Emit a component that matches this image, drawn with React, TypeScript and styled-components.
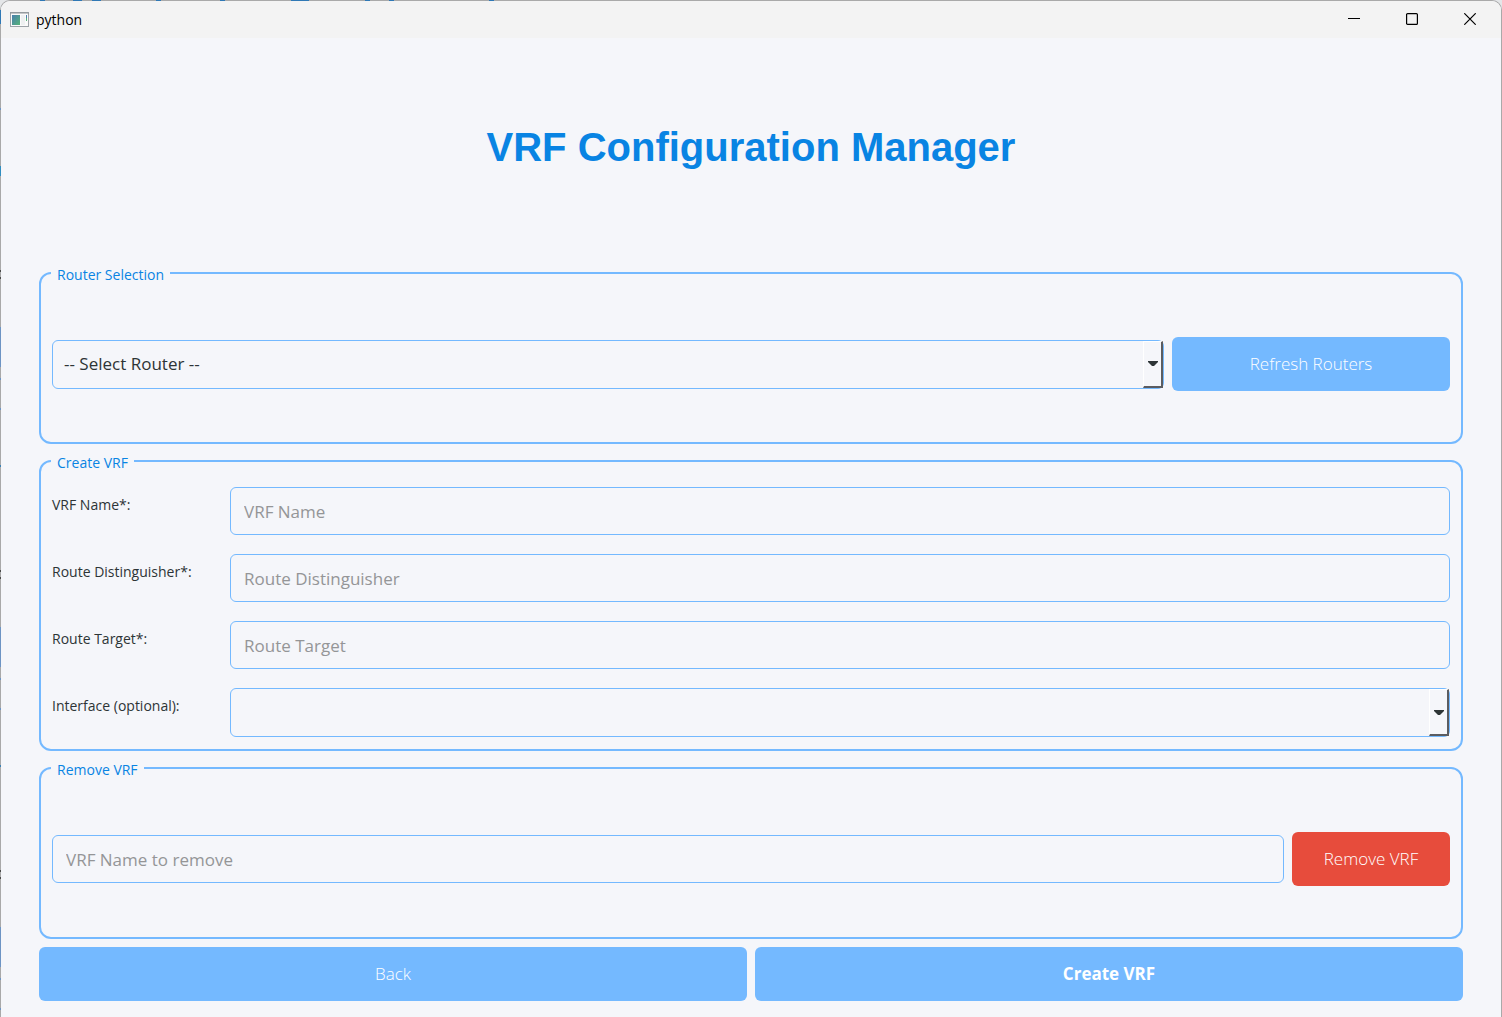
import React from "react";
import styled, { createGlobalStyle } from "styled-components";

const color = {
  surface: "#f5f6fa",
  titleBar: "#f3f3f3",
  frame: "#a9a9a9",
  accent: "#74b9ff",
  heading: "#0984e3",
  text: "#2d3436",
  hint: "#949597",
  danger: "#e74c3c",
};

const uiFont = `"Open Sans", "Noto Sans", sans-serif`;

/* Marks of the windows behind that show through the thin frame: [start, end, colour]. */
type Mark = [number, number, string];

const topMarks: Mark[] = [
  [40, 45, "#2f78b5"],
  [73, 82, "#2f78b5"],
  [92, 101, "#2f78b5"],
  [156, 161, "#2f78b5"],
  [220, 225, "#2f78b5"],
  [291, 309, "#2f78b5"],
  [365, 370, "#2f78b5"],
  [389, 394, "#2f78b5"],
  [489, 494, "#2f78b5"],
];

const leftMarks: Mark[] = [
  [10, 24, "#2f78b5"],
  [108, 110, "#6d94c4"],
  [166, 176, "#2f8dc0"],
  ...[0, 300, 600].flatMap((y): Mark[] => [
    [y + 270, y + 272, "#4a4a4a"],
    [y + 277, y + 279, "#4a4a4a"],
    [y + 327, y + 367, "#6d94c4"],
    [y + 378, y + 380, "#6d94c4"],
    [y + 408, y + 410, "#6d94c4"],
    [y + 465, y + 467, "#3a80b4"],
  ]),
].filter(([start]) => (start as number) < 1017) as Mark[];

const marksGradient = (direction: string, marks: Mark[]) =>
  `linear-gradient(${direction}, ${marks
    .map(([a, b, c]) => `${color.frame} ${a}px, ${c} ${a}px, ${c} ${b}px, ${color.frame} ${b}px`)
    .join(", ")})`;

const GlobalStyle = createGlobalStyle`
  *, *::before, *::after { box-sizing: border-box; }
  body {
    margin: 0;
    background: #e4e6e8;
    font-family: ${uiFont};
    color: ${color.text};
  }
`;

const Window = styled.div`
  display: flex;
  flex-direction: column;
  min-height: 100vh;
  border: 1px solid transparent;
  border-bottom: 0;
  border-radius: 10px 10px 0 0;
  overflow: hidden;
  background:
    linear-gradient(${color.surface}, ${color.surface}) padding-box,
    ${marksGradient("to bottom", leftMarks)} left / 1px 100% no-repeat border-box,
    ${marksGradient("to right", topMarks)} border-box;
`;

const TitleBar = styled.header`
  display: flex;
  align-items: center;
  height: 37px;
  padding: 0 2px 0 9px;
  background: ${color.titleBar};
`;

const AppName = styled.span`
  flex: 1;
  padding-left: 7px;
  font-size: 14px;
  line-height: 20px;
  color: #000;
`;

const CaptionButton = styled.button`
  display: flex;
  align-items: center;
  justify-content: center;
  width: 58px;
  height: 100%;
  padding: 0 0 2px;
  border: 0;
  background: transparent;
`;

const Content = styled.main`
  display: flex;
  flex: 1;
  flex-direction: column;
  gap: 8px;
  padding: 0 38px 16px;
`;

const Heading = styled.h1`
  display: flex;
  flex: 1;
  align-items: center;
  justify-content: center;
  margin: 0;
  font: bold 40px/48px "Liberation Sans", Arial, sans-serif;
  color: ${color.heading};
`;

const Group = styled.fieldset`
  min-width: 0;
  margin: 0;
  padding: 0 11px;
  border: 2px solid ${color.accent};
  border-radius: 12px;
`;

const GroupTitle = styled.legend`
  padding: 4px 6px 0;
  margin-left: -1px;
  font-size: 14px;
  line-height: 14px;
  color: ${color.heading};
`;

const ActionRow = styled.div`
  display: flex;
  align-items: center;
  gap: 8px;
  padding: 55px 0 51px;
`;

const Form = styled.div`
  display: grid;
  grid-template-columns: 178px 1fr;
  row-gap: 19px;
  padding: 17px 0 12px;
`;

const FieldLabel = styled.label`
  padding-top: 8px;
  font-size: 14px;
  line-height: 20px;
`;

const TextField = styled.input`
  flex: 1;
  min-width: 0;
  height: 48px;
  padding: 0 13px;
  border: 1px solid ${color.accent};
  border-radius: 6px;
  background: transparent;
  font: 17px/24px ${uiFont};
  color: ${color.text};

  &::placeholder { color: ${color.hint}; opacity: 1; }
`;

const ComboFrame = styled.div`
  position: relative;
  flex: 4;
  min-width: 0;
`;

const ComboSelect = styled.select`
  display: block;
  width: 100%;
  height: 49px;
  padding: 0 32px 0 11px;
  appearance: none;
  border: 1px solid ${color.accent};
  border-radius: 6px;
  background: transparent;
  font: 17px/24px ${uiFont};
  color: ${color.text};
`;

const ComboArrow = styled.span`
  position: absolute;
  top: 1px;
  right: 1px;
  bottom: 1px;
  display: flex;
  align-items: center;
  justify-content: center;
  width: 20px;
  border: 1px solid #fff;
  border-right: 2px solid #5b5c60;
  border-bottom: 2px solid #5b5c60;
  background: ${color.surface};
  pointer-events: none;
`;

const Button = styled.button<{ $danger?: boolean; $bold?: boolean }>`
  flex: ${(p) => (p.$danger ? "0 0 158px" : "1 1 0")};
  height: 54px;
  padding: 0;
  border: 0;
  border-radius: 6px;
  background: ${(p) => (p.$danger ? color.danger : color.accent)};
  font: ${(p) => (p.$bold ? 700 : 300)} 17px/24px ${uiFont};
  color: #fff;
`;

const Actions = styled.div`
  display: flex;
  gap: 8px;
`;

const AppIcon = () => (
  <svg width="19" height="16" viewBox="0 0 19 16" aria-hidden="true">
    <defs>
      <linearGradient id="screen" x1="0" y1="0" x2="1" y2="1">
        <stop offset="0" stopColor="#4a7fae" />
        <stop offset="1" stopColor="#55b378" />
      </linearGradient>
    </defs>
    <rect x="0.5" y="0.5" width="18" height="14" fill="#fafafa" stroke="#9da3a8" />
    <path d="M0 1H19" stroke="#8d9296" />
    <rect x="2" y="3" width="8" height="10" fill="url(#screen)" />
    <rect x="11" y="3" width="4" height="10" fill="#eef0f1" />
    <rect x="16" y="3" width="1" height="3" fill="#4a7fae" />
    <rect x="16" y="6" width="1" height="3" fill="#55b378" />
  </svg>
);

const Combo = ({ id, label, option }: { id: string; label?: string; option: string }) => (
  <ComboFrame>
    <ComboSelect id={id} aria-label={label}>
      <option>{option}</option>
    </ComboSelect>
    <ComboArrow>
      <svg width="10" height="5" viewBox="0 0 10 5" aria-hidden="true">
        <path d="M0 0H10V1L6 5H4L0 1Z" fill={color.text} />
      </svg>
    </ComboArrow>
  </ComboFrame>
);

const textFields = [
  { id: "vrf-name", label: "VRF Name*:", hint: "VRF Name" },
  { id: "route-distinguisher", label: "Route Distinguisher*:", hint: "Route Distinguisher" },
  { id: "route-target", label: "Route Target*:", hint: "Route Target" },
];

export default function App() {
  return (
    <>
      <GlobalStyle />
      <Window>
        <TitleBar>
          <AppIcon />
          <AppName>python</AppName>
          <CaptionButton aria-label="Minimize">
            <svg width="12" height="12" viewBox="0 0 12 12">
              <path d="M0 5.5H12" stroke="#000" />
            </svg>
          </CaptionButton>
          <CaptionButton aria-label="Maximize">
            <svg width="12" height="12" viewBox="0 0 12 12">
              <rect x="0.6" y="0.6" width="10.8" height="10.8" rx="1" fill="none" stroke="#000" strokeWidth="1.2" />
            </svg>
          </CaptionButton>
          <CaptionButton aria-label="Close">
            <svg width="12" height="12" viewBox="0 0 12 12">
              <path d="M0.3 0.3L11.7 11.7M11.7 0.3L0.3 11.7" stroke="#000" strokeWidth="1.2" />
            </svg>
          </CaptionButton>
        </TitleBar>
        <Content>
          <Heading>VRF Configuration Manager</Heading>
          <Group>
            <GroupTitle>Router Selection</GroupTitle>
            <ActionRow>
              <Combo id="router" label="Router" option="-- Select Router --" />
              <Button type="button">Refresh Routers</Button>
            </ActionRow>
          </Group>
          <Group>
            <GroupTitle>Create VRF</GroupTitle>
            <Form>
              {textFields.map((f) => (
                <React.Fragment key={f.id}>
                  <FieldLabel htmlFor={f.id}>{f.label}</FieldLabel>
                  <TextField id={f.id} type="text" placeholder={f.hint} />
                </React.Fragment>
              ))}
              <FieldLabel htmlFor="interface">Interface (optional):</FieldLabel>
              <Combo id="interface" option="" />
            </Form>
          </Group>
          <Group>
            <GroupTitle>Remove VRF</GroupTitle>
            <ActionRow>
              <TextField type="text" aria-label="VRF Name to remove" placeholder="VRF Name to remove" />
              <Button type="button" $danger>Remove VRF</Button>
            </ActionRow>
          </Group>
          <Actions>
            <Button type="button">Back</Button>
            <Button type="button" $bold>Create VRF</Button>
          </Actions>
        </Content>
      </Window>
    </>
  );
}
